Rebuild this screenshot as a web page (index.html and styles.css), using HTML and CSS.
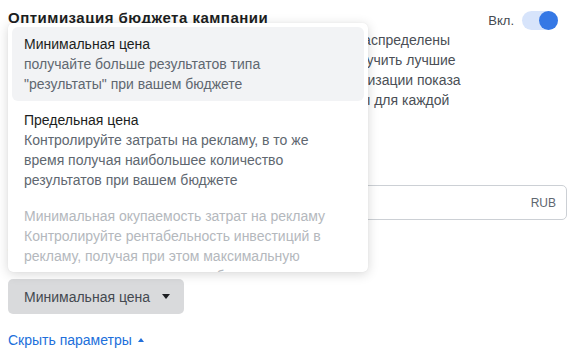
FILE: index.html
```html
<!DOCTYPE html>
<html lang="ru">
<head>
<meta charset="utf-8">
<title>Оптимизация бюджета кампании</title>
<link rel="stylesheet" href="styles.css">
</head>
<body>
<div class="page">
  <div class="header">
    <div class="title">Оптимизация бюджета кампании</div>
    <div class="switch-wrap">
      <span class="switch-label">Вкл.</span>
      <span class="switch"><span class="knob"></span></span>
    </div>
  </div>
  <p class="desc">Ваш бюджет будет оптимизирован, и средства будут распределены<br>между группами объявлений так, чтобы Вы смогли получить лучшие<br>результаты, соответствующие выбираемой цели оптимизации показа<br>рекламы и стратегии ставок а также с лимитами суммы для каждой<br>группы объявлений.</p>
  <div class="label">Бюджет кампании</div>
  <div class="input">
    <span class="input-value"></span>
    <span class="currency">RUB</span>
  </div>
  <div class="label label-bid">Стратегия ставок кампании</div>
  <div class="dropdown">
    <div class="menu">
      <div class="option option-active">
        <div class="option-title">Минимальная цена</div>
        <div class="option-text">получайте больше результатов типа "результаты" при вашем бюджете</div>
      </div>
      <div class="option">
        <div class="option-title">Предельная цена</div>
        <div class="option-text">Контролируйте затраты на рекламу, в то же время получая наибольшее количество результатов при вашем бюджете</div>
      </div>
      <div class="option option-disabled">
        <div class="option-title">Минимальная окупаемость затрат на рекламу</div>
        <div class="option-text">Контролируйте рентабельность инвестиций в рекламу, получая при этом максимальную ценность покупок при вашем бюджете</div>
      </div>
    </div>
    <button class="select">Минимальная цена <span class="caret"></span></button>
  </div>
  <a class="toggle-link" href="#">Скрыть параметры <span class="caret-up"></span></a>
</div>
</body>
</html>
```
FILE: styles.css
```css
* { box-sizing: border-box; }
html, body { margin: 0; padding: 0; background: #fff; }
body {
  font-family: "Liberation Sans", Arial, Helvetica, sans-serif;
  font-size: 14px;
  color: #1c1e21;
}
.page {
  width: 572px;
  height: 355px;
  overflow: hidden;
  padding: 8px 5px 0 8px;
}
.header {
  display: flex;
  justify-content: space-between;
  align-items: flex-start;
  height: 22px;
}
.title {
  font-size: 15px;
  font-weight: bold;
  letter-spacing: 0.5px;
  line-height: 20px;
  color: #1c1e21;
}
.switch-wrap {
  display: flex;
  align-items: center;
  margin-top: 3px;
  margin-right: 9px;
}
.switch-label {
  font-size: 13px;
  color: #444950;
  margin-right: 8px;
}
.switch {
  display: flex;
  justify-content: flex-end;
  width: 36px;
  height: 19px;
  border-radius: 10px;
  background: #d7e4fb;
}
.knob {
  width: 19px;
  height: 19px;
  border-radius: 50%;
  background: #3578e5;
}
.desc {
  margin: 0;
  font-size: 14px;
  line-height: 20px;
  color: #4b4f56;
}
.label {
  margin-top: 24px;
  line-height: 20px;
  font-weight: bold;
  color: #1c1e21;
}
.input {
  display: flex;
  align-items: center;
  justify-content: space-between;
  height: 35px;
  margin-top: 11px;
  padding: 0 10px;
  border: 1px solid #ccd0d5;
  border-radius: 5px;
}
.currency {
  font-size: 12px;
  color: #606770;
}
.label-bid {
  margin-top: 20px;
}
.dropdown {
  position: relative;
  margin-top: 19px;
  width: 176px;
}
.select {
  display: flex;
  align-items: center;
  height: 35px;
  width: 176px;
  padding: 0 14px 0 16px;
  border: none;
  border-radius: 5px;
  background: #d9dadc;
  font-family: inherit;
  font-size: 14px;
  color: #444950;
}
.caret {
  margin-left: auto;
  width: 0;
  height: 0;
  border-left: 4.5px solid transparent;
  border-right: 4.5px solid transparent;
  border-top: 5px solid #1c1e21;
}
.menu {
  position: absolute;
  left: 0;
  bottom: calc(100% + 7px);
  width: 360px;
  height: 249px;
  padding: 4px;
  overflow: hidden;
  background: #fff;
  border-radius: 5px;
  box-shadow: 0 2px 12px rgba(0, 0, 0, 0.16), 0 0 1px rgba(0, 0, 0, 0.1);
  z-index: 2;
}
.option {
  padding: 7px 28px 7px 12px;
  margin-bottom: 2px;
  border-radius: 6px;
  line-height: 20px;
}
.option-active {
  background: #f2f3f5;
}
.option-title {
  color: #1c1e21;
}
.option-text {
  color: #606770;
}
.option-disabled .option-title,
.option-disabled .option-text {
  color: #b4b8bd;
}
.toggle-link {
  display: inline-flex;
  align-items: center;
  margin-top: 16px;
  line-height: 20px;
  color: #216fdb;
  text-decoration: none;
}
.caret-up {
  margin-left: 6px;
  width: 0;
  height: 0;
  border-left: 3.5px solid transparent;
  border-right: 3.5px solid transparent;
  border-bottom: 4px solid #216fdb;
}
```
